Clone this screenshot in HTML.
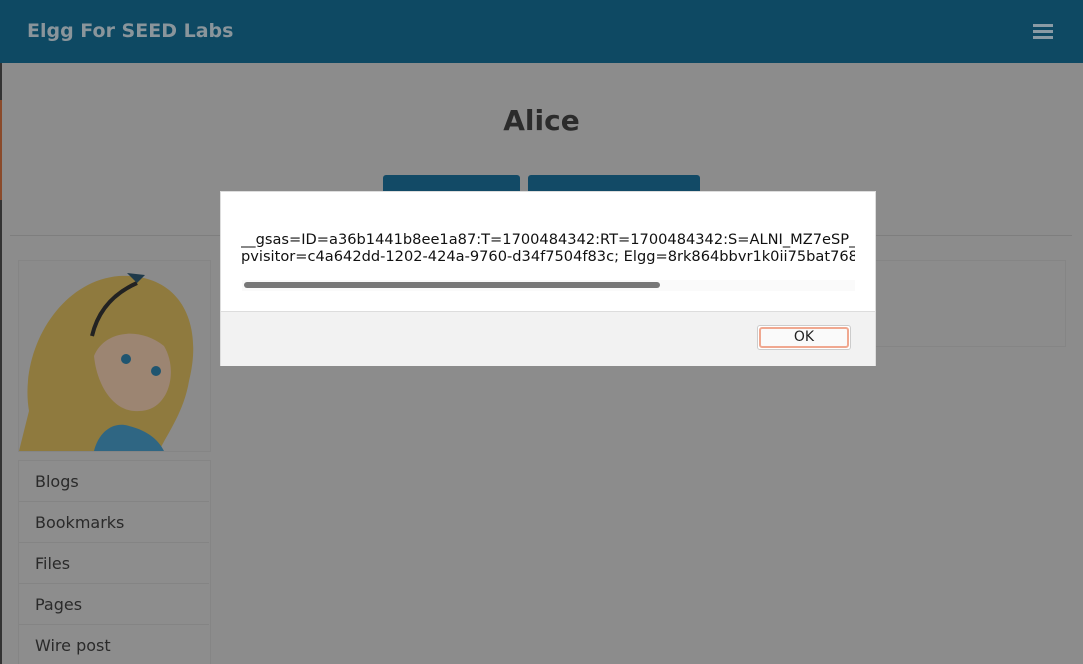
<!DOCTYPE html>
<html><head><style>
html,body{margin:0;width:1083px;height:664px;overflow:hidden}
body{background:#8c8c8c;font-family:"Liberation Sans","DejaVu Sans",sans-serif;position:relative}
.a{position:absolute}
</style></head><body>
<div class="a" style="left:0;top:0;width:1083px;height:63px;background:#0e4963"></div>
<div class="a" style="left:27px;top:20px;font-family:'DejaVu Sans',sans-serif;font-weight:bold;font-size:19px;color:#8a959b">Elgg For SEED Labs</div>
<div class="a" style="left:1033px;top:24px;width:20px;height:3px;background:#8a9ba5;box-shadow:0 6px 0 #8a9ba5,0 12px 0 #8a9ba5"></div>
<div class="a" style="left:0;top:63px;width:2px;height:601px;background:#333"></div>
<div class="a" style="left:0;top:100px;width:2px;height:100px;background:#8a4a2a"></div>
<div class="a" style="left:0;top:104px;width:1083px;text-align:center;font-family:'DejaVu Sans',sans-serif;font-weight:bold;font-size:28px;color:#2b2b2b">Alice</div>
<div class="a" style="left:383px;top:175px;width:137px;height:30px;background:#124a66;border-radius:3px"></div>
<div class="a" style="left:528px;top:175px;width:172px;height:30px;background:#124a66;border-radius:3px"></div>
<div class="a" style="left:10px;top:235px;width:1062px;height:1px;background:#7e7e7e"></div>
<div class="a" style="left:18px;top:260px;width:191px;height:190px;border:1px solid #858585;background:#8b8b8b;overflow:hidden">
<svg width="191" height="190" viewBox="0 0 191 190">
<path d="M10 150 C0 90 40 20 100 15 C160 12 185 60 170 120 C165 150 150 170 140 190 L0 190 Z" fill="#8f7a3e"/>
<path d="M75 190 C80 170 95 160 110 165 C130 170 140 180 145 190 Z" fill="#2f6683"/>
<path d="M75 95 C85 70 120 65 145 85 C160 110 150 150 120 150 C95 152 78 125 75 95 Z" fill="#9c8572"/>
<circle cx="107" cy="98" r="5" fill="#1f5570"/><circle cx="137" cy="110" r="5" fill="#1f5570"/>
<path d="M73 75 C80 45 100 30 118 22" stroke="#222" stroke-width="4" fill="none"/>
<path d="M108 12 L118 22 L126 14" fill="#1f3a4a"/>
</svg></div>
<div class="a" style="left:18px;top:460px;width:191px;height:210px;border:1px solid #858585;background:#8d8d8d"></div>
<div class="a" style="left:35px;top:461px;font-family:'DejaVu Sans',sans-serif;font-size:16px;color:#2a2a2a;line-height:41px">Blogs<br>Bookmarks<br>Files<br>Pages<br>Wire post</div>
<div class="a" style="left:19px;top:501px;width:190px;height:1px;background:#848484;box-shadow:0 41px 0 #848484,0 82px 0 #848484,0 123px 0 #848484"></div>
<div class="a" style="left:262px;top:260px;width:802px;height:85px;border:1px solid #858585"></div>
<div class="a" style="left:220px;top:191px;width:656px;height:175px;background:#fff;border:1px solid #ddd;box-sizing:border-box"></div>
<div class="a" style="left:221px;top:311px;width:654px;height:54px;background:#f2f2f2;border-top:1px solid #ddd"></div>
<div class="a" style="left:241px;top:231px;width:614px;overflow:hidden;white-space:nowrap;font-family:'DejaVu Sans',sans-serif;font-size:14.6px;color:#111;line-height:17px">__gsas=ID=a36b1441b8ee1a87:T=1700484342:RT=1700484342:S=ALNI_MZ7eSP_<br>pvisitor=c4a642dd-1202-424a-9760-d34f7504f83c; Elgg=8rk864bbvr1k0ii75bat768</div>
<div class="a" style="left:242px;top:280px;width:613px;height:11px;background:#fafafa"></div>
<div class="a" style="left:244px;top:282px;width:416px;height:6px;background:#777;border-radius:3px"></div>
<div class="a" style="left:757px;top:325px;width:92px;height:23px;border:1px solid #ccc;border-radius:3px;background:#fff"></div>
<div class="a" style="left:759px;top:327px;width:86px;height:17px;border:2px solid #f0a890;border-radius:3px;background:#fafafa;text-align:center;font-family:'DejaVu Sans',sans-serif;font-size:14px;line-height:17px;color:#222">OK</div>
</body></html>
